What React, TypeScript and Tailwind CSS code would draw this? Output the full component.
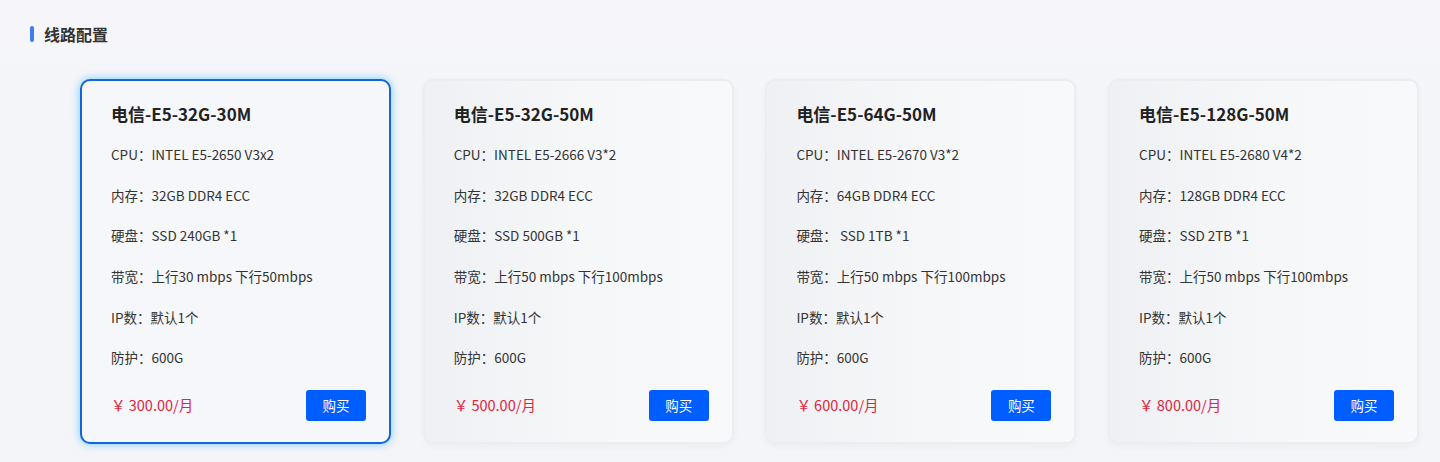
import React from "react";

const cards = [
  {
    title: "电信-E5-32G-30M",
    rows: ["CPU：INTEL E5-2650 V3x2", "内存：32GB DDR4 ECC", "硬盘：SSD 240GB *1", "带宽：上行30 mbps 下行50mbps", "IP数：默认1个", "防护：600G"],
    price: "￥ 300.00/月",
    active: true,
  },
  {
    title: "电信-E5-32G-50M",
    rows: ["CPU：INTEL E5-2666 V3*2", "内存：32GB DDR4 ECC", "硬盘：SSD 500GB *1", "带宽：上行50 mbps 下行100mbps", "IP数：默认1个", "防护：600G"],
    price: "￥ 500.00/月",
    active: false,
  },
  {
    title: "电信-E5-64G-50M",
    rows: ["CPU：INTEL E5-2670 V3*2", "内存：64GB DDR4 ECC", "硬盘： SSD 1TB *1", "带宽：上行50 mbps 下行100mbps", "IP数：默认1个", "防护：600G"],
    price: "￥ 600.00/月",
    active: false,
  },
  {
    title: "电信-E5-128G-50M",
    rows: ["CPU：INTEL E5-2680 V4*2", "内存：128GB DDR4 ECC", "硬盘：SSD 2TB *1", "带宽：上行50 mbps 下行100mbps", "IP数：默认1个", "防护：600G"],
    price: "￥ 800.00/月",
    active: false,
  },
];

export default function App() {
  return (
    <div
      className="w-[1440px] h-[462px] overflow-hidden bg-gradient-to-b from-[#f5f5fa] to-[#f4f5f8] text-[#333]"
      style={{ fontFamily: '"Noto Sans CJK SC", "Noto Sans", sans-serif' }}
    >
      <div className="flex items-center pl-[30px] pt-[17px] h-[33px] box-content">
        <div className="w-[4px] h-[16px] rounded-full bg-[#3d7bf7]" />
        <div className="ml-[10px] text-[16px] font-bold text-[#333] leading-[20px]">线路配置</div>
      </div>
      <div className="flex gap-[31.7px] pl-[80px] pt-[29px]">
        {cards.map((c) => (
          <div
            key={c.title}
            className={
              c.active
                ? "w-[311px] h-[365px] rounded-[10px] border-2 border-[#1565d8] bg-[#f6f7fa] shadow-[0_0_8px_rgba(0,170,255,0.55)] flex flex-col px-[29px] pt-[12px]"
                : "w-[311px] h-[365px] rounded-[10px] border-2 border-[#ebedf1] bg-gradient-to-r from-[#eef0f3] via-[#f6f7f9] to-[#f8f9fb] shadow-[0_2px_6px_rgba(0,0,0,0.04)] flex flex-col px-[29px] pt-[12px]"
            }
          >
            <div className="h-[40.7px] flex items-center text-[17px] font-bold text-[#222]">{c.title}</div>
            {c.rows.map((r) => (
              <div key={r} className="h-[40.7px] flex items-center text-[13.5px] text-[#333] whitespace-pre">
                {r}
              </div>
            ))}
            <div className="mt-[12px] flex items-center justify-between">
              <div className="text-[14.5px] text-[#e0263f]">{c.price}</div>
              <button className="w-[60px] h-[31px] rounded-[3px] bg-[#005dff] text-white text-[13.5px] mr-[-6px]">
                购买
              </button>
            </div>
          </div>
        ))}
      </div>
    </div>
  );
}
